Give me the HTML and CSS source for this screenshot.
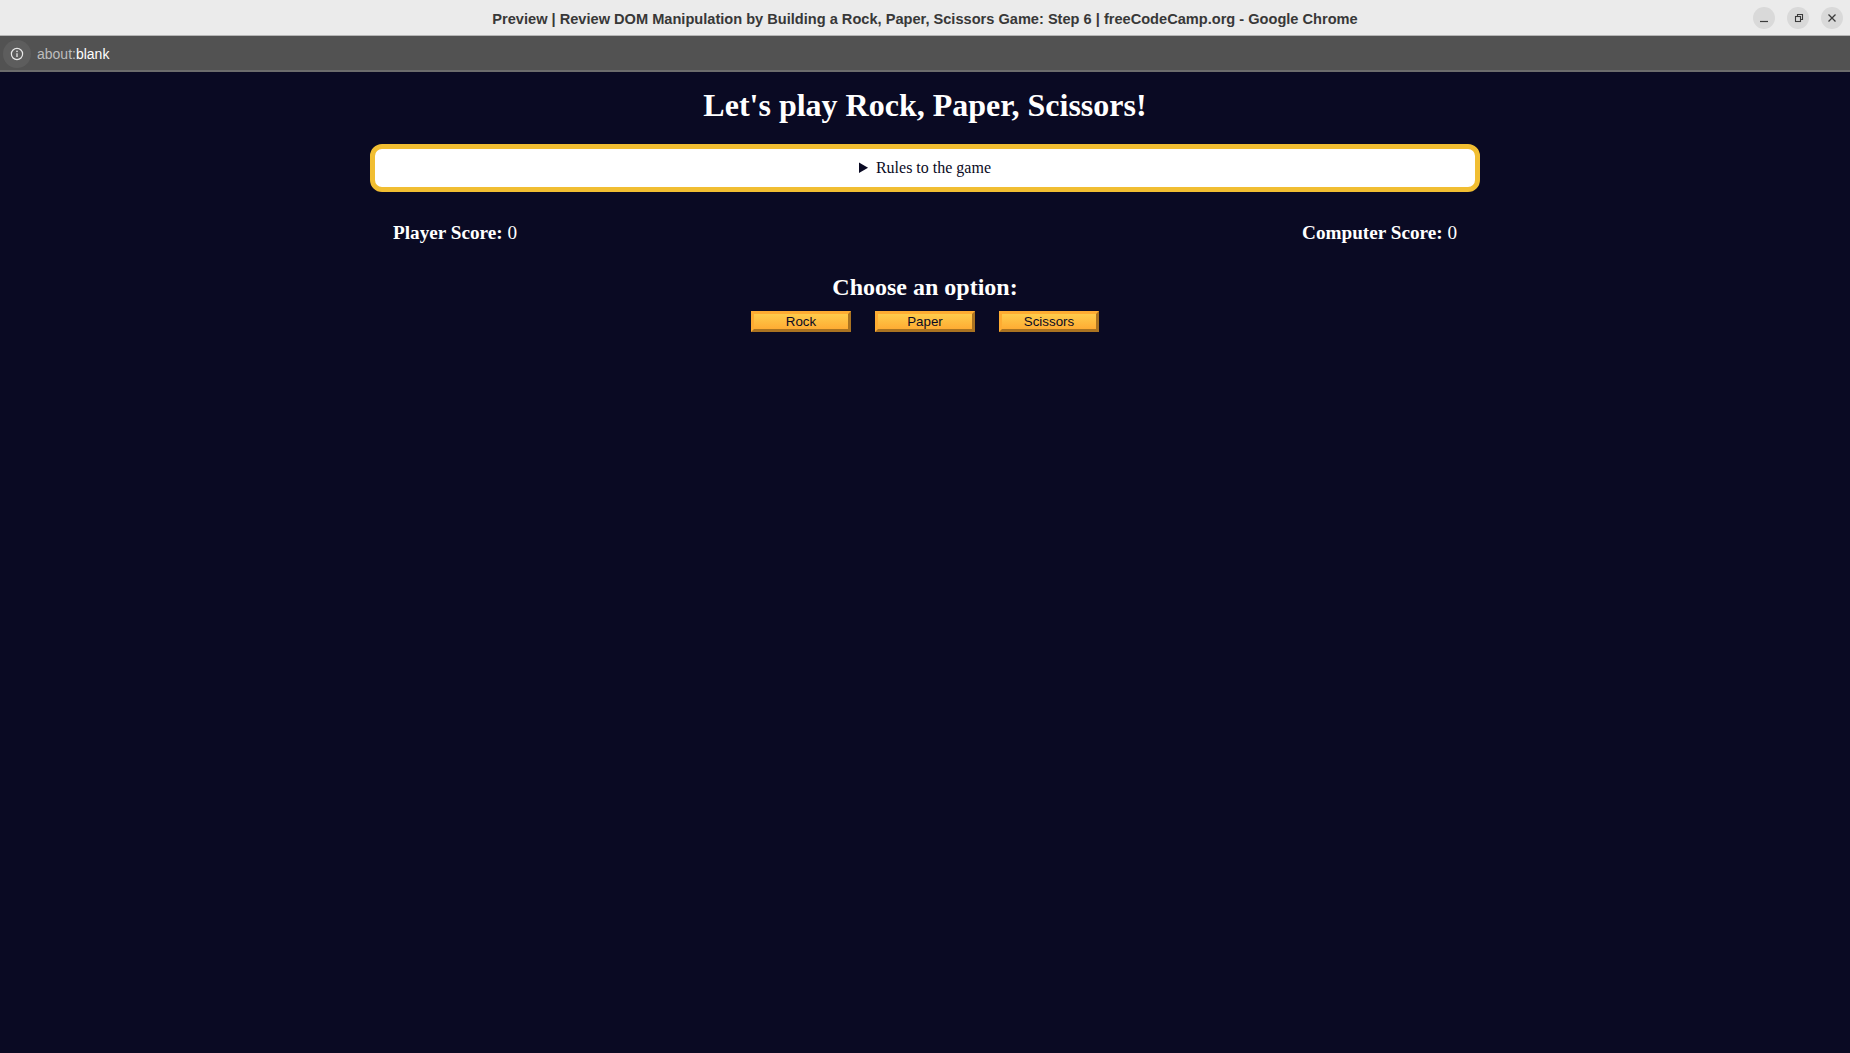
FILE: index.html
```html
<!DOCTYPE html>
<html lang="en">
<head>
<meta charset="utf-8">
<title>Rock, Paper, Scissors</title>
<link rel="stylesheet" href="styles.css">
</head>
<body>
<header class="titlebar">
  <div class="titlebar-spacer"></div>
  <div class="window-title">Preview | Review DOM Manipulation by Building a Rock, Paper, Scissors Game: Step 6 | freeCodeCamp.org - Google Chrome</div>
  <div class="window-controls">
    <span class="win-btn">
      <svg width="22" height="22" viewBox="0 0 22 22"><line x1="7" y1="14.5" x2="15" y2="14.5" stroke="#3b3b3b" stroke-width="1.2"/></svg>
    </span>
    <span class="win-btn">
      <svg width="22" height="22" viewBox="0 0 22 22"><rect x="8.5" y="9.5" width="5" height="5" fill="none" stroke="#3b3b3b" stroke-width="1.1"/><path d="M10.5 9.5 V7.5 H15.5 V12.5 H13.5" fill="none" stroke="#3b3b3b" stroke-width="1.1"/></svg>
    </span>
    <span class="win-btn">
      <svg width="22" height="22" viewBox="0 0 22 22"><path d="M7.5 7.5 L14.5 14.5 M14.5 7.5 L7.5 14.5" stroke="#3b3b3b" stroke-width="1.3"/></svg>
    </span>
  </div>
</header>
<div class="addressbar">
  <span class="info-icon">
    <svg width="14" height="14" viewBox="0 0 14 14"><circle cx="7" cy="7" r="5.6" fill="none" stroke="#e8e8e8" stroke-width="1.2"/><line x1="7" y1="6.2" x2="7" y2="10" stroke="#e8e8e8" stroke-width="1.3"/><circle cx="7" cy="4.4" r="0.8" fill="#e8e8e8"/></svg>
  </span>
  <span class="url"><span class="url-scheme">about:</span>blank</span>
</div>
<main class="page">
  <h1>Let's play Rock, Paper, Scissors!</h1>
  <details class="rules-container">
    <summary>Rules to the game</summary>
  </details>
  <div class="score-container">
    <strong>Player Score: <span class="score">0</span></strong>
    <strong>Computer Score: <span class="score">0</span></strong>
  </div>
  <section class="options-container">
    <h2>Choose an option:</h2>
    <div class="btn-container">
      <button class="btn">Rock</button>
      <button class="btn">Paper</button>
      <button class="btn">Scissors</button>
    </div>
  </section>
</main>
</body>
</html>
```
FILE: styles.css
```css
*,
*::before,
*::after {
  box-sizing: border-box;
  margin: 0;
  padding: 0;
}

html, body {
  background-color: #0a0a23;
}

body {
  font-family: "Liberation Serif", "Times New Roman", serif;
  color: #ffffff;
  min-height: 100vh;
}

/* ---------- browser chrome ---------- */
.titlebar {
  display: grid;
  grid-template-columns: 1fr auto 1fr;
  align-items: center;
  height: 36px;
  background-color: #ebebeb;
  border-bottom: 1px solid #b5b5b5;
}

.window-title {
  font-family: "Liberation Sans", Arial, sans-serif;
  font-weight: bold;
  font-size: 14.6px;
  color: #383838;
  white-space: nowrap;
  padding-top: 3px;
}

.window-controls {
  display: flex;
  justify-content: flex-end;
  gap: 12px;
  padding-right: 7px;
}

.win-btn {
  width: 22px;
  height: 22px;
  border-radius: 50%;
  background-color: #d9d9d9;
  display: flex;
}

.addressbar {
  display: flex;
  align-items: center;
  height: 36px;
  background-color: #525252;
  border-bottom: 2px solid #6c6c6c;
  padding-left: 3px;
  padding-top: 1px;
}

.info-icon {
  width: 28px;
  height: 28px;
  border-radius: 50%;
  background-color: #5d5d5d;
  display: flex;
  align-items: center;
  justify-content: center;
}

.url {
  font-family: "Liberation Sans", Arial, sans-serif;
  font-size: 14px;
  color: #ffffff;
  margin-left: 6px;
}

.url-scheme {
  color: #bdbdbd;
}

/* ---------- page ---------- */
.page {
  text-align: center;
}

h1 {
  font-size: 32px;
  margin: 15px 0 20px;
}

.rules-container {
  width: 60%;
  margin: auto;
  padding: 10px 0;
  border-radius: 12px;
  border: 5px solid #f1be32;
  background-color: #ffffff;
  color: #0a0a23;
  font-size: 16px;
}

.rules-container summary {
  cursor: pointer;
}

.score-container {
  width: 60%;
  margin: 30px auto;
  padding: 0 23px;
  display: flex;
  justify-content: space-between;
  font-size: 1.2rem;
}

.score {
  font-weight: normal;
}

.options-container {
  margin: 20px 0;
}

h2 {
  font-size: 24px;
}

.btn {
  cursor: pointer;
  width: 100px;
  margin: 10px;
  font-family: "Liberation Sans", Arial, sans-serif;
  font-size: 13.333px;
  color: #0a0a23;
  background-color: #feac32;
  background-image: linear-gradient(#fecc4c, #ffac33);
  border: 3px outset #feac32;
}
```
